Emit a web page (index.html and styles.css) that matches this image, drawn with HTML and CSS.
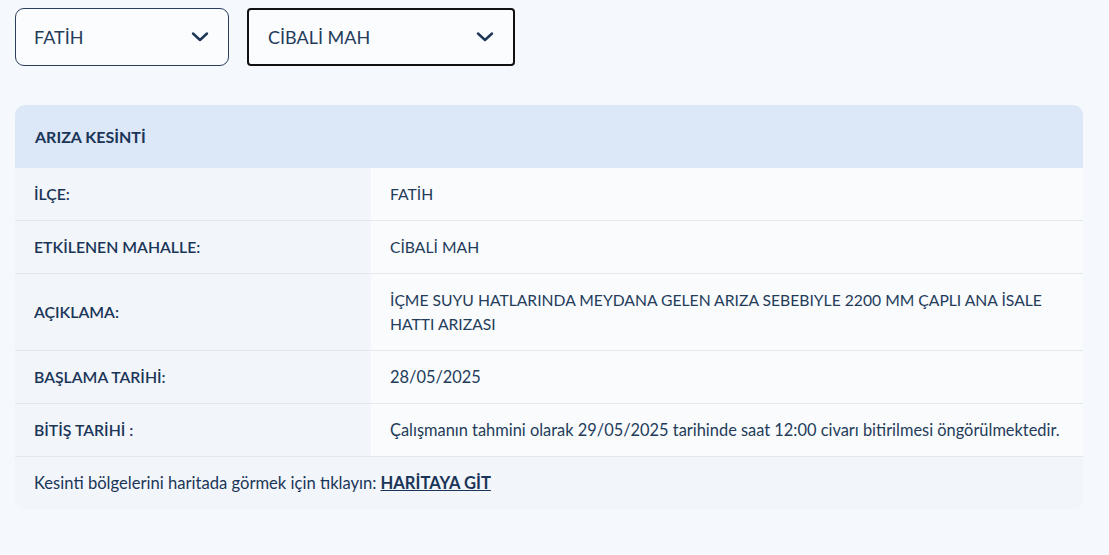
FILE: index.html
```html
<!DOCTYPE html>
<html lang="tr">
<head>
<meta charset="UTF-8" />
<meta name="viewport" content="width=device-width, initial-scale=1" />
<title>Arıza Kesinti</title>
<link rel="stylesheet" href="styles.css">
</head>
<body>

<div class="page">
  <div class="filters">
    <div class="select select-ilce">
      <span>FATİH</span>
      <svg class="chevron" width="18" height="12" viewBox="0 0 18 12"><path d="M2 2.5 L9 9 L16 2.5" fill="none" stroke="#1d3557" stroke-width="2.4" stroke-linecap="round" stroke-linejoin="round"/></svg>
    </div>
    <div class="select select-mah focused">
      <span>CİBALİ MAH</span>
      <svg class="chevron" width="18" height="12" viewBox="0 0 18 12"><path d="M2 2.5 L9 9 L16 2.5" fill="none" stroke="#1d3557" stroke-width="2.4" stroke-linecap="round" stroke-linejoin="round"/></svg>
    </div>
  </div>

  <div class="card">
    <div class="card-head">ARIZA KESİNTİ</div>
    <table class="info">
      <tr>
        <th>İLÇE:</th>
        <td class="caps">FATİH</td>
      </tr>
      <tr>
        <th>ETKİLENEN MAHALLE:</th>
        <td class="caps">CİBALİ MAH</td>
      </tr>
      <tr class="tall">
        <th>AÇIKLAMA:</th>
        <td class="caps">İÇME SUYU HATLARINDA MEYDANA GELEN ARIZA SEBEBIYLE 2200 MM ÇAPLI ANA İSALE HATTI ARIZASI</td>
      </tr>
      <tr>
        <th>BAŞLAMA TARİHİ:</th>
        <td>28/05/2025</td>
      </tr>
      <tr>
        <th>BİTİŞ TARİHİ :</th>
        <td>Çalışmanın tahmini olarak 29/05/2025 tarihinde saat 12:00 civarı bitirilmesi öngörülmektedir.</td>
      </tr>
    </table>
    <div class="card-foot">
      Kesinti bölgelerini haritada görmek için tıklayın: <a href="#">HARİTAYA GİT</a>
    </div>
  </div>
</div>

</body>
</html>
```

FILE: styles.css
```css
body {
  margin: 0;
  background: #f5f8fc;
  font-family: 'Lato', 'Open Sans', sans-serif;
  color: #1d3557;
}
.page {
  padding: 8px 26px 40px 15px;
}
.filters {
  display: flex;
  gap: 18px;
}
.select {
  display: flex;
  align-items: center;
  justify-content: space-between;
  box-sizing: border-box;
  height: 58px;
  background: #fbfcfe;
  font-size: 18px;
  color: #243b5a;
}
.select-ilce {
  width: 214px;
  border: 1px solid #2b3f5c;
  border-radius: 9px;
  padding: 0 19px 0 18px;
}
.select-mah {
  width: 268px;
  border: 2px solid #111;
  border-radius: 4px;
  padding: 0 19px 0 19px;
}
.chevron {
  display: block;
}
.card {
  margin-top: 39px;
  background: #f2f5fa;
  border-radius: 10px;
  overflow: hidden;
}
.card-head {
  background: #dce7f7;
  height: 63px;
  display: flex;
  align-items: center;
  padding-left: 20px;
  font-size: 16px;
  font-weight: 700;
  color: #1a3558;
}
.info {
  width: 100%;
  border-collapse: collapse;
}
.info tr {
  border-bottom: 1px solid #e3e8ef;
}
.info th, .info td {
  height: 52px;
  padding: 0 19px;
  text-align: left;
  font-size: 16.4px;
  line-height: 24px;
  vertical-align: middle;
}
.info th {
  width: 318px;
  font-size: 15.8px;
  font-weight: 600;
  color: #1a3558;
  background: #f2f5fa;
}
.info td {
  font-weight: 400;
  color: #243b5a;
  background: #f9fbfd;
}
.info td.caps {
  font-size: 15.7px;
}
.info tr.tall th, .info tr.tall td {
  height: 76px;
}
.card-foot {
  height: 52px;
  display: flex;
  align-items: center;
  padding-left: 19px;
  font-size: 16.6px;
  color: #1a3558;
}
.card-foot a {
  margin-left: 4px;
  color: #1a3558;
  font-weight: 700;
  text-decoration: underline;
}
```
